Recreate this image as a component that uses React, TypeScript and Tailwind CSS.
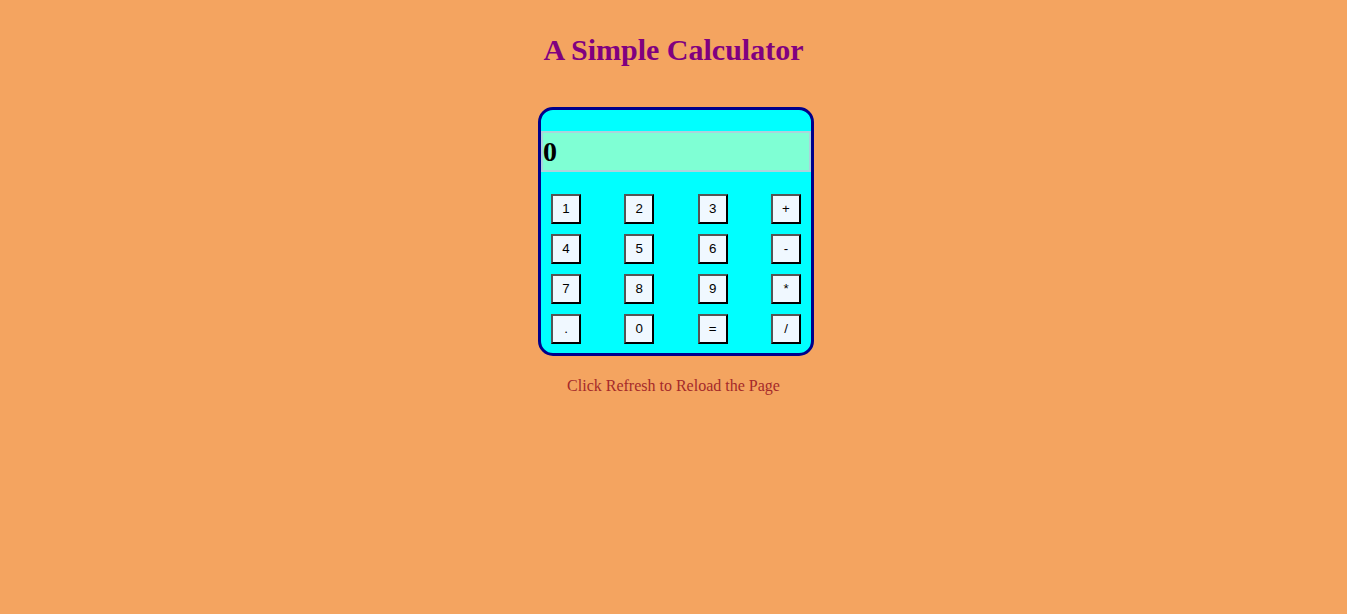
const keys = [
    ['1', '2', '3', '+'],
    ['4', '5', '6', '-'],
    ['7', '8', '9', '*'],
    ['.', '0', '=', '/'],
]

function Key({ label }: { label: string }) {
    return (
        <button className="w-[30px] h-[30px] bg-[#F0F8FF] border-2 border-t-[#555555] border-l-[#555555] border-b-black border-r-black text-[13.33px] text-black font-['Liberation_Sans',Arial,sans-serif] flex items-center justify-center">
            {label}
        </button>
    )
}

export default function App() {
    return (
        <div className="min-h-screen bg-[#F4A460] font-['Liberation_Serif','Times_New_Roman',serif] flex flex-col items-center">
            <h1 className="pt-[33px] text-[30px] leading-[34px] font-bold text-[#800080]">A Simple Calculator</h1>

            {/* calculator */}
            <div className="mt-[40px] ml-[5px] w-[276px] border-[3px] border-[#00008B] rounded-[15px] bg-[#00FFFF] pt-[21px] pb-[9px]">
                <div className="h-[41px] border-2 border-[#ABD4DC] bg-[#7FFFD4] pt-[2px] text-[28px] leading-[33px] font-bold text-black">
                    0
                </div>
                <div className="mt-[22px] px-[10px] flex flex-col gap-[10px]">
                    {keys.map((row, i) => (
                        <div key={i} className="flex justify-between">
                            {row.map((k) => <Key key={k} label={k} />)}
                        </div>
                    ))}
                </div>
            </div>

            <p className="mt-[21px] text-[16px] leading-[18px] text-[#A52A2A]">Click Refresh to Reload the Page</p>
        </div>
    )
}
